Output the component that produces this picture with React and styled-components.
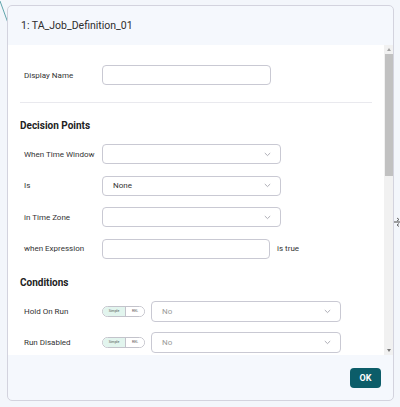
import React from "react";
import styled, { createGlobalStyle } from "styled-components";

const GlobalStyle = createGlobalStyle`
  html, body {
    margin: 0;
    padding: 0;
    background: #f3f6fb;
    font-family: Roboto, "Noto Sans", Arial, sans-serif;
  }
`;

const Page = styled.div`
  position: relative;
  width: 400px;
  height: 407px;
  overflow: hidden;
  padding: 5px 6px 6px 7px;
  box-sizing: border-box;
`;

const Backdrop = styled.svg`
  position: absolute;
  left: 0;
  top: 0;
  width: 400px;
  height: 407px;
  z-index: 0;
`;

const Dialog = styled.div`
  position: relative;
  z-index: 1;
  display: flex;
  flex-direction: column;
  height: 100%;
  border: 1px solid #d3d3de;
  border-radius: 5px;
  background: #f5f8fd;
  overflow: hidden;
  box-sizing: border-box;
`;

const Header = styled.div`
  height: 39px;
  display: flex;
  align-items: center;
  padding-left: 13px;
  font-size: 10.5px;
  color: #2e2e2e;
  flex-shrink: 0;
`;

const Body = styled.div`
  display: flex;
  height: 310px;
  background: #fff;
  flex-shrink: 0;
`;

const Content = styled.div`
  flex: 1;
  overflow: hidden;
  padding: 20px 12px 0 12px;
`;

const Scrollbar = styled.div`
  width: 9px;
  background: #f1f1f1;
  display: flex;
  flex-direction: column;
  align-items: center;
`;

const Arrow = styled.div`
  width: 0;
  height: 0;
  margin: 3px 0;
  border-left: 2.5px solid transparent;
  border-right: 2.5px solid transparent;
  ${(p) =>
    p.$down
      ? "border-top: 3px solid #7a7a7a; margin-top: auto;"
      : "border-bottom: 3px solid #a3a3a3;"}
`;

const Thumb = styled.div`
  width: 8px;
  height: 122px;
  background: #c1c1c1;
`;

const Row = styled.div`
  display: flex;
  align-items: center;
  padding-left: 4px;
  margin-bottom: ${(p) => p.$mb ?? 11.5}px;
`;

const Label = styled.div`
  width: 78px;
  flex-shrink: 0;
  font-size: 8px;
  color: #333;
`;

const Input = styled.div`
  width: ${(p) => p.$w}px;
  height: 20px;
  box-sizing: border-box;
  border: 1px solid #c9c9d3;
  border-radius: 4px;
  background: #fff;
`;

const Select = styled.div`
  width: ${(p) => p.$w}px;
  height: ${(p) => p.$h ?? 20}px;
  box-sizing: border-box;
  border: 1px solid #c9c9d3;
  border-radius: 4px;
  background: #fff;
  display: flex;
  align-items: center;
  padding: 0 9px 0 10px;
  font-size: 8px;
  color: ${(p) => (p.$muted ? "#9a9a9a" : "#333")};
`;

const Value = styled.span`
  flex: 1;
`;

const Chevron = () => (
  <svg width="7" height="5" viewBox="0 0 7 5">
    <path d="M0.8 1 L3.5 3.6 L6.2 1" fill="none" stroke="#9a9aa4" strokeWidth="0.8" />
  </svg>
);

const Suffix = styled.span`
  font-size: 8px;
  color: #333;
  margin-left: 7px;
`;

const Divider = styled.div`
  height: 1px;
  background: #e9e9ee;
  margin: 17px 0 16px 0;
`;

const Heading = styled.div`
  font-size: 10px;
  font-weight: 700;
  color: #222;
  line-height: 14px;
  margin-top: ${(p) => p.$mt ?? 0}px;
  margin-bottom: 11px;
`;

const Toggle = styled.div`
  display: flex;
  width: 43px;
  height: 11px;
  box-sizing: border-box;
  border: 1px solid #c3c3cb;
  border-radius: 6px;
  overflow: hidden;
  margin-right: 6px;
  flex-shrink: 0;
`;

const ToggleOpt = styled.div`
  flex: ${(p) => (p.$active ? "0 0 22px" : "1")};
  display: flex;
  align-items: center;
  justify-content: center;
  font-size: 3.5px;
  color: #555;
  background: ${(p) => (p.$active ? "#e2f5ee" : "#fff")};
  border-right: ${(p) => (p.$active ? "1px solid #c3c3cb" : "none")};
`;

const Footer = styled.div`
  flex: 1;
  display: flex;
  align-items: center;
  justify-content: flex-end;
  padding-right: 12px;
`;

const OkButton = styled.button`
  width: 31px;
  height: 20px;
  border: none;
  border-radius: 4px;
  background: #0c5d69;
  color: #fff;
  font-family: inherit;
  font-weight: 700;
  font-size: 9px;
  padding: 0;
  margin-top: 1px;
`;

const ModeToggle = () => (
  <Toggle>
    <ToggleOpt $active>Simple</ToggleOpt>
    <ToggleOpt>REL</ToggleOpt>
  </Toggle>
);

export default function App() {
  return (
    <>
      <GlobalStyle />
      <Page>
        <Backdrop viewBox="0 0 400 407">
          <line x1="0" y1="1" x2="8" y2="23" stroke="#3a8f97" strokeWidth="0.8" />
          <line x1="393" y1="222" x2="400" y2="222" stroke="#666" strokeWidth="1.2" />
          <path d="M397 218 l2 1.5 l-2 1.5" fill="none" stroke="#444" strokeWidth="0.8" />
          <path d="M399 223.5 l-2 1.5 l2 1.5" fill="none" stroke="#444" strokeWidth="0.8" />
        </Backdrop>
        <Dialog>
          <Header>1: TA_Job_Definition_01</Header>
          <Body>
            <Content>
              <Row $mb={0}>
                <Label>Display Name</Label>
                <Input $w={169} />
              </Row>
              <Divider />
              <Heading>Decision Points</Heading>
              <Row>
                <Label>When Time Window</Label>
                <Select $w={179}>
                  <Value />
                  <Chevron />
                </Select>
              </Row>
              <Row>
                <Label>Is</Label>
                <Select $w={179}>
                  <Value>None</Value>
                  <Chevron />
                </Select>
              </Row>
              <Row>
                <Label>in Time Zone</Label>
                <Select $w={179}>
                  <Value />
                  <Chevron />
                </Select>
              </Row>
              <Row $mb={0}>
                <Label>when Expression</Label>
                <Input $w={168} />
                <Suffix>is true</Suffix>
              </Row>
              <Heading $mt={17}>Conditions</Heading>
              <Row $mb={10}>
                <Label>Hold On Run</Label>
                <ModeToggle />
                <Select $w={190} $h={21} $muted>
                  <Value>No</Value>
                  <Chevron />
                </Select>
              </Row>
              <Row>
                <Label>Run Disabled</Label>
                <ModeToggle />
                <Select $w={190} $h={21} $muted>
                  <Value>No</Value>
                  <Chevron />
                </Select>
              </Row>
            </Content>
            <Scrollbar>
              <Arrow />
              <Thumb />
              <Arrow $down />
            </Scrollbar>
          </Body>
          <Footer>
            <OkButton>OK</OkButton>
          </Footer>
        </Dialog>
      </Page>
    </>
  );
}
